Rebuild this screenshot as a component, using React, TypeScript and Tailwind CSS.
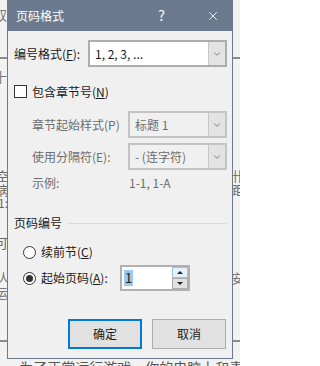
import { X, ChevronDown } from "lucide-react";

const font = { fontFamily: '"Noto Sans CJK SC", "Liberation Sans", sans-serif' };

// combo box: enabled or greyed out
const Combo = ({ value, disabled }: { value: string; disabled?: boolean }) => (
  <div
    className={`flex h-[27px] flex-1 items-stretch border-2 ${
      disabled ? "border-[#c3c3c3] bg-[#f0f0f0]" : "border-[#adadad] bg-white"
    }`}
  >
    <div className={`flex flex-1 items-center pl-[5px] text-[12px] ${disabled ? "text-[#6d6d6d]" : "text-[#1a1a1a]"}`}>
      {value}
    </div>
    <div className="flex w-[17px] items-center justify-center border-l border-[#c6c6c6] bg-[#e3e3e3]">
      <ChevronDown className="h-[10px] w-[10px] text-[#444]" strokeWidth={1.5} />
    </div>
  </div>
);

const Radio = ({ checked }: { checked?: boolean }) => (
  <div className="flex h-[13px] w-[13px] items-center justify-center rounded-full border border-[#333] bg-white">
    {checked && <div className="h-[7px] w-[7px] rounded-full bg-[#333]" />}
  </div>
);

const App = () => {
  return (
    <div className="relative h-[366px] w-[240px] overflow-hidden bg-[#f2f2f2] text-[#444]" style={font}>
      {/* document behind the dialog */}
      <div className="absolute left-0 top-[57px] h-[2px] w-[240px] bg-[#8a8a8a]" />
      <div className="absolute left-0 top-[340px] h-[2px] w-[240px] bg-[#8a8a8a]" />
      <span className="absolute left-[-6px] top-[8px] text-[13px] leading-none text-[#777]">双</span>
      <span className="absolute left-[-6px] top-[70px] text-[13px] leading-none text-[#777]">十</span>
      <span className="absolute left-[-4px] top-[169px] text-[13px] leading-none text-[#666]">空</span>
      <span className="absolute left-[-4px] top-[183px] text-[13px] leading-none text-[#666]">病</span>
      <span className="absolute left-[-2px] top-[197px] text-[12px] leading-none text-[#666]">1:</span>
      <span className="absolute left-[-5px] top-[236px] text-[13px] leading-none text-[#666]">可</span>
      <span className="absolute left-[-3px] top-[271px] text-[13px] leading-none text-[#777]">人</span>
      <span className="absolute left-[-5px] top-[286px] text-[13px] leading-none text-[#777]">运</span>
      <span className="absolute left-[231px] top-[169px] text-[13px] leading-none text-[#666]">卄</span>
      <span className="absolute left-[231px] top-[183px] text-[13px] leading-none text-[#666]">距</span>
      <span className="absolute left-[231px] top-[271px] text-[13px] leading-none text-[#777]">安</span>
      <span className="absolute left-[2px] top-[360px] whitespace-nowrap text-[14px] leading-none text-[#555]">
        、 为了正常运行游戏，你的电脑上和毒上
      </span>

      {/* dialog window */}
      <div className="absolute left-[7px] top-0 flex h-[359px] w-[226px] flex-col border-x border-b border-[#6b7a8e] bg-[#f0f0f0]">
        <div className="flex h-[31px] items-center bg-[#6b7a8e] pl-[8px] text-white">
          <span className="text-[12px]">页码格式</span>
          <span className="ml-auto mr-[41px] text-[14px]">?</span>
          <X className="mr-[12px] h-[14px] w-[14px]" strokeWidth={1.4} />
        </div>

        <div className="flex flex-col pl-[6px] pr-[5px] text-[12px] text-[#1a1a1a]">
          <div className="mt-[9px] flex items-center">
            <span className="w-[74px]">编号格式(<u>F</u>):</span>
            <Combo value="1, 2, 3, ..." />
          </div>

          <div className="mt-[18px] flex h-[13px] items-center gap-[5px]">
            <div className="h-[13px] w-[13px] border border-[#333] bg-white" />
            <span>包含章节号(<u>N</u>)</span>
          </div>

          <div className="mt-[13px] flex items-center pl-[18px] text-[#6d6d6d]">
            <span className="w-[96px]">章节起始样式(P)</span>
            <Combo value="标题 1" disabled />
          </div>

          <div className="mt-[5px] flex items-center pl-[18px] text-[#6d6d6d]">
            <span className="w-[96px]">使用分隔符(E):</span>
            <Combo value="-   (连字符)" disabled />
          </div>

          <div className="mt-[5px] flex h-[16px] items-center pl-[18px] text-[#6d6d6d]">
            <span className="w-[97px]">示例:</span>
            <span>1-1, 1-A</span>
          </div>

          <div className="mt-[24px] flex h-[16px] items-center gap-[6px]">
            <span>页码编号</span>
            <div className="h-px flex-1 bg-[#d9d9d9]" />
          </div>

          <div className="mt-[13px] flex h-[16px] items-center gap-[5px] pl-[9px]">
            <Radio />
            <span>续前节(<u>C</u>)</span>
          </div>

          <div className="mt-[5px] flex items-center pl-[9px]">
            <Radio checked />
            <span className="ml-[5px] w-[79px]">起始页码(<u>A</u>):</span>
            <div className="flex h-[26px] w-[70px] items-stretch border-2 border-[#b0b0b0] bg-white">
              <div className="flex flex-1 items-center pl-[2px]">
                <span className="bg-[#99c9ef] px-px text-[13px] leading-[16px]">1</span>
              </div>
              <div className="flex w-[16px] flex-col">
                <div className="flex flex-1 items-center justify-center border border-[#9ac3e8] bg-[#e5f1fb]">
                  <div className="h-0 w-0 border-x-[3px] border-b-[3px] border-x-transparent border-b-[#222]" />
                </div>
                <div className="flex flex-1 items-center justify-center border border-[#adadad] bg-[#e1e1e1]">
                  <div className="h-0 w-0 border-x-[3px] border-t-[3px] border-x-transparent border-t-[#222]" />
                </div>
              </div>
            </div>
          </div>

          <div className="mt-[28px] flex justify-end gap-[10px] pr-px">
            <button className="h-[30px] w-[74px] border-2 border-[#0078d7] bg-[#e1e1e1] text-[12px]">确定</button>
            <button className="h-[30px] w-[74px] border border-[#adadad] bg-[#e1e1e1] text-[12px]">取消</button>
          </div>
        </div>
      </div>
    </div>
  );
};

export default App;
